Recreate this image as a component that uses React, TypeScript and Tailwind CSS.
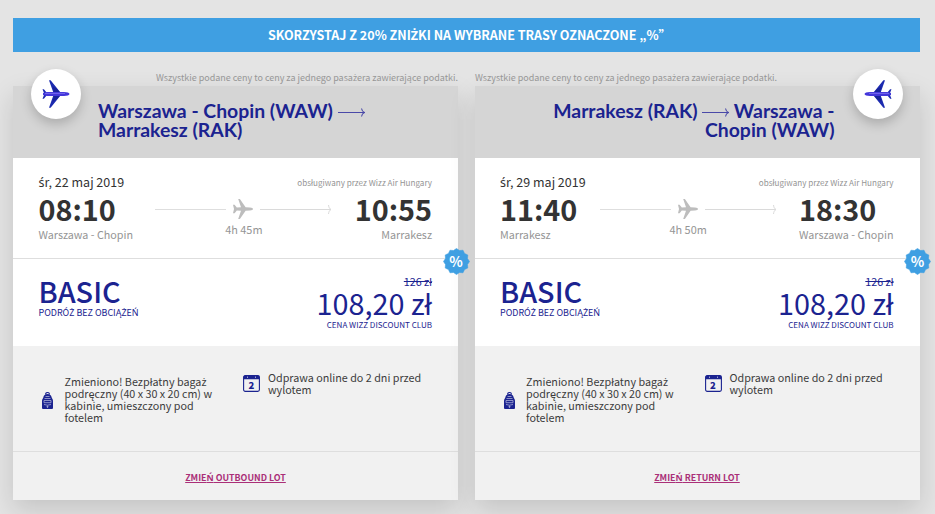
import React from 'react';

interface Flight {
  id: string;
  title: React.ReactNode;
  date: string;
  departure: string;
  arrival: string;
  from: string;
  to: string;
  duration: string;
  changeLabel: string;
  inbound?: boolean;
}

// The CJK family has no precomposed Polish letters, so those come from Noto Sans
const Pl = ({ children }: { children: string }) => (
  <>
    {children.split(/([ąęćłńśźżĄĘĆŁŃŚŹŻ])/).map((part, i) =>
      i % 2 ? (
        <span key={i} className="font-['Noto_Sans',sans-serif]">{part}</span>
      ) : (
        part
      )
    )}
  </>
);

const RouteArrow = () => (
  <svg className="inline-block align-[1px]" width="27" height="10" viewBox="0 0 27 10" fill="none" stroke="#4a49a8" strokeWidth="1.1">
    <path d="M0 5.500h26M23.500 1.500c.3 2 1.300 3.300 3 4-1.700.7-2.700 2-3 4" />
  </svg>
);

const flights: Flight[] = [
  {
    id: 'outbound',
    title: <>Warszawa - Chopin (WAW) <RouteArrow /><br />Marrakesz (RAK)</>,
    date: 'śr, 22 maj 2019',
    departure: '08:10',
    arrival: '10:55',
    from: 'Warszawa - Chopin',
    to: 'Marrakesz',
    duration: '4h 45m',
    changeLabel: 'ZMIEŃ OUTBOUND LOT'
  },
  {
    id: 'return',
    title: <>Marrakesz (RAK) <RouteArrow /> Warszawa -<br />Chopin (WAW)</>,
    date: 'śr, 29 maj 2019',
    departure: '11:40',
    arrival: '18:30',
    from: 'Marrakesz',
    to: 'Warszawa - Chopin',
    duration: '4h 50m',
    changeLabel: 'ZMIEŃ RETURN LOT',
    inbound: true
  }
];

const PlaneLogo = ({ flipped }: { flipped?: boolean }) => (
  <svg width="28" height="28" viewBox="0 0 28 28" className={flipped ? '-scale-x-100' : ''}>
    <path d="M7 .3 8.600.3 18.500 12.500 11.500 13ZM7 27.700h1.600L18.500 15.500 11.500 15Z" fill="#1c2bb0" />
    <path d="M10.500 6 15.500 9.500 18 12.500 12 12.800ZM10.500 22 15.500 18.500 18 15.500 12 15.200Z" fill="#18229a" />
    <path d="M.5 9.300h1.400L5 13H2ZM.5 18.700h1.400L5 15H2Z" fill="#1c2bb0" />
    <path d="M1 13.100 5 12.100h17c3 0 5.500.9 5.500 1.900s-2.500 2-5.500 2H5L1 14.900Z" fill="#4336da" />
    <path d="M3 13.400h20" stroke="#7668ee" strokeWidth="1" />
  </svg>
);

const SmallPlane = () => (
  <svg width="20" height="20" viewBox="0 0 20 20" fill="#bdbdbd">
    <path d="M5.200 0h1.700l5.700 8.300 4.400.2c1.900.1 3 .8 3 1.500s-1.100 1.400-3 1.500l-4.400.2L6.900 20H5.200L8 11.800l-4.200-.3L1.600 14.200H0l1-4.200L0 5.800h1.600l2.200 2.700L8 8.200Z" />
  </svg>
);

const DiscountBadge = () => (
  <div className="absolute -top-[11.500px] -right-[11.500px] z-10 flex h-[27px] w-[27px] items-center justify-center">
    <svg className="absolute inset-0" width="27" height="27" viewBox="-14 -14 28 28" fill="#3f9fe2">
      <path d="M0-13.500 3.100-11.400 6.750-11.690 8.340-8.340 11.690-6.750 11.400-3.100 13.500 0 11.400 3.100 11.690 6.750 8.340 8.340 6.750 11.690 3.100 11.400 0 13.500-3.100 11.400-6.750 11.690-8.340 8.340-11.690 6.750-11.400 3.100-13.500 0-11.400-3.100-11.690-6.750-8.340-8.340-6.750-11.690-3.100-11.400Z" stroke="#3f9fe2" strokeLinejoin="round" strokeWidth=".6" />
    </svg>
    <span className="relative text-[14px] leading-[27px] font-bold text-white">%</span>
  </div>
);

const BackpackIcon = () => (
  <svg width="11" height="18" viewBox="0 0 11 18">
    <path d="M3.500 2.500a2 2 0 0 1 4 0" fill="none" stroke="#1b2390" strokeWidth="1.100" />
    <path d="M0 9C0 7 1 6.500 1.300 5.500 1.700 3.500 3 2 5.500 2s3.800 1.500 4.200 3.500C10 6.500 11 7 11 9v7q0 1-1 1H1q-1 0-1-1Z" fill="#1b2390" />
    <path d="M3.500 4.500h4M2.500 6.500h6M2 8.500h7v2.200H2ZM2 12.500l3.500.7 3.500-.7M5.500 13.500v2.500M4.500 14.700h2" fill="none" stroke="#a9acd5" strokeWidth=".8" />
  </svg>
);

const CalendarIcon = () => (
  <div className="relative flex h-[17px] w-[17px] justify-center text-[#1b2390]">
    <svg className="absolute inset-0" width="17" height="17" viewBox="0 0 17 17">
      <rect x=".6" y=".6" width="15.800" height="15.800" rx="1.600" fill="none" stroke="currentColor" strokeWidth="1.100" />
      <path d="M.5 2Q.5.500 2 .5h13q1.500 0 1.500 1.500v2.200H.5Z" fill="currentColor" />
      <path d="M4.500 1.500v1.500M12.500 1.500v1.500" stroke="#9da0d0" strokeWidth="1" />
    </svg>
    <span className="relative mt-[4.500px] text-[9.500px] leading-[10px] font-black">2</span>
  </div>
);

const FlightRoute = ({ duration }: { duration: string }) => (
  <div className="w-[177px] pt-[3px]">
    <div className="flex h-[20px] items-center">
      <div className="h-px w-[71px] bg-[#dedede]" />
      <div className="mx-[7px]">
        <SmallPlane />
      </div>
      <svg width="72" height="10" viewBox="0 0 72 10" fill="none" stroke="#dadada">
        <path d="M0 5.500h71M68.500 1c.3 2.500 1 3.700 2.500 4.500-1.500.8-2.200 2-2.500 4.500" />
      </svg>
    </div>
    <div className="text-center text-[10.900px] leading-[20px] text-[#959595]">{duration}</div>
  </div>
);

const FlightCard = ({ flight }: { flight: Flight }) => (
  <section className="w-[445px]">
    <p className={`h-[18px] pt-px text-[8.970px] leading-[18px] text-[#999] ${flight.inbound ? 'pl-[0.5px] text-left' : 'text-right'}`}>
      <Pl>Wszystkie podane ceny to ceny za jednego pasażera zawierające podatki.</Pl>
    </p>
    <div className="relative h-[414px] bg-[#f1f1f1] shadow-[0_10px_25px_rgba(0,0,0,0.14)]">
      <div
        className={`absolute -top-[17.500px] flex h-[50px] w-[50px] items-center justify-center rounded-full bg-white shadow-[0_5px_12px_rgba(0,0,0,0.2)] ${
          flight.inbound ? 'right-[17px]' : 'left-[17.500px]'
        }`}
      >
        <PlaneLogo flipped={flight.inbound} />
      </div>

      <header className={`h-[72px] bg-[#d5d5d5] pt-[15px] ${flight.inbound ? 'pr-[85px] text-right' : 'pl-[85px]'}`}>
        <h2 className="font-['Lato'] text-[19.400px] leading-[19px] font-bold text-[#1b2390]">{flight.title}</h2>
      </header>

      <div className="h-[100px] bg-white pt-[14px] pr-[26px] pl-[25.500px]">
        <div className="flex h-[22px] items-center justify-between">
          <span className="text-[12.500px] text-[#333]"><Pl>{flight.date}</Pl></span>
          <span className="text-[8.100px] text-[#959595]"><Pl>obsługiwany przez Wizz Air Hungary</Pl></span>
        </div>
        <div className="flex items-start justify-between pt-px">
          <div>
            <div className="text-[28.800px] leading-[28px] font-bold text-[#333]">{flight.departure}</div>
            <div className="text-[10.750px] leading-[23px] text-[#959595]">{flight.from}</div>
          </div>
          <div className="pt-px">
            <FlightRoute duration={flight.duration} />
          </div>
          <div>
            <div className="text-[28.800px] leading-[28px] font-bold text-[#333]">{flight.arrival}</div>
            <div className="text-right text-[10.750px] leading-[23px] text-[#959595]">{flight.to}</div>
          </div>
        </div>
      </div>

      <div className="relative flex h-[88px] justify-between border-t border-[#dedede] bg-white pr-[26px] pl-[25.500px] text-[#1b2390]">
        <DiscountBadge />
        <div className="pt-[17px]">
          <div className="text-[28.800px] leading-[30px] font-medium">BASIC</div>
          <div className="pt-px text-[8.950px] leading-[12px]"><Pl>PODRÓŻ BEZ OBCIĄŻEŃ</Pl></div>
        </div>
        <div className="pt-[16px] text-right">
          <div className="text-[10.750px] leading-[13px] line-through"><Pl>126 zł</Pl></div>
          <div className="text-[28.800px] leading-[28px]"><Pl>108,20 zł</Pl></div>
          <div className="pt-px text-[8.050px] leading-[11px]">CENA WIZZ DISCOUNT CLUB</div>
        </div>
      </div>

      <div className="flex h-[105px] px-[29px] pt-[26px] text-[10.750px] leading-[12px] text-[#3c3c3c]">
        <div className="mt-[4px] flex h-[48px] w-[201px] items-center gap-[11.500px]">
          <div className="pt-[2px]">
            <BackpackIcon />
          </div>
          <p>
            <Pl>Zmieniono! Bezpłatny bagaż</Pl><br />
            <Pl>podręczny (40 x 30 x 20 cm) w</Pl><br />
            kabinie, umieszczony pod<br />
            fotelem
          </p>
        </div>
        <div className="flex gap-[8px]">
          <div className="pt-[3px]">
            <CalendarIcon />
          </div>
          <p>
            Odprawa online do 2 dni przed<br />wylotem
          </p>
        </div>
      </div>

      <footer className="flex h-[49px] items-center justify-center border-t border-[#dedede] pt-[4px]">
        <a href="#" className="text-[8.850px] font-bold text-[#aa2f78] underline"><Pl>{flight.changeLabel}</Pl></a>
      </footer>
    </div>
  </section>
);

export default function App() {
  return (
    <main className="h-[514px] w-[935px] overflow-hidden bg-[#e4e4e4] pt-[18px] pl-[13px] font-['Noto_Sans_CJK_SC',sans-serif] whitespace-nowrap">
      <div className="h-[34px] w-[907px] bg-[#3f9fe2] pl-[6px] text-center text-[12.550px] leading-[34px] font-bold text-white">
        <Pl>SKORZYSTAJ Z 20% ZNIŻKI NA WYBRANE TRASY OZNACZONE „%”</Pl>
      </div>
      <div className="flex gap-[16.500px] pt-[16px]">
        {flights.map((flight) => (
          <FlightCard key={flight.id} flight={flight} />
        ))}
      </div>
    </main>
  );
}
